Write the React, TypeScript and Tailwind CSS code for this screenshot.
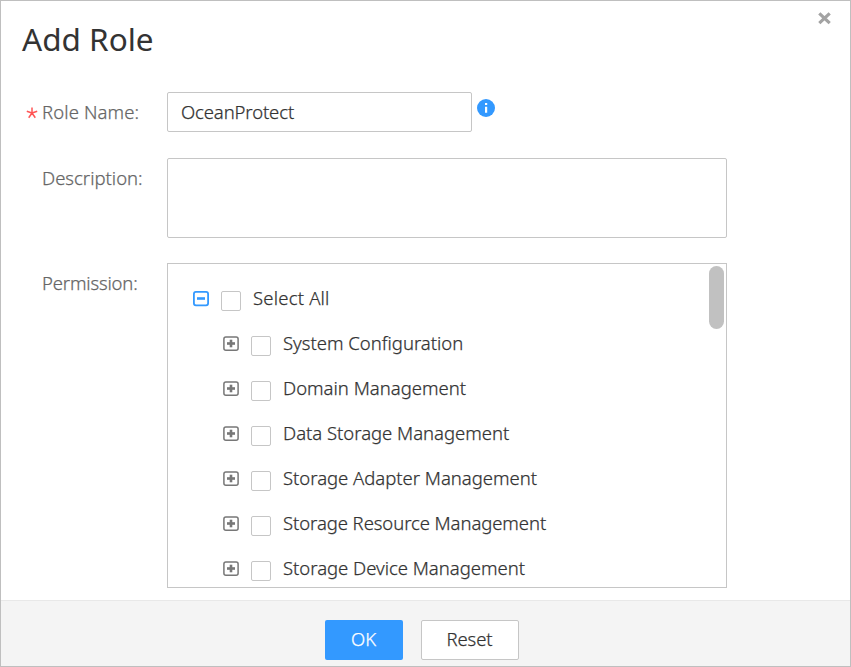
import React from "react";

const permissions = [
  { name: "System Configuration", tracking: "tracking-[0px]" },
  { name: "Domain Management", tracking: "tracking-[0px]" },
  { name: "Data Storage Management", tracking: "tracking-[-0.02px]" },
  { name: "Storage Adapter Management", tracking: "tracking-[-0.02px]" },
  { name: "Storage Resource Management", tracking: "tracking-[-0.08px]" },
  { name: "Storage Device Management", tracking: "tracking-[-0.02px]" },
];

function Toggle({ open }: { open?: boolean }) {
  return (
    <svg width="16" height="16" viewBox="0 0 16 16" className={open ? "text-[#3399ff]" : "text-[#777777]"}>
      <rect x="0.9" y="0.9" width="14.2" height="13.4" rx="2" fill="none" stroke="currentColor" strokeWidth={open ? 1.8 : 1.5} />
      <rect x="4" y="6.2" width="8" height="2.6" fill="currentColor" />
      {!open && <rect x="6.7" y="3.7" width="2.6" height="7.6" fill="currentColor" />}
    </svg>
  );
}

function Checkbox() {
  return <span className="ml-3 size-5 rounded-[2px] border border-[#c6c6c6] bg-white" />;
}

export default function App() {
  return (
    <div className="flex h-[667px] w-[851px] flex-col overflow-hidden border border-[#bfbfbf] bg-white font-['Noto_Sans',sans-serif] text-[18.5px] leading-6 font-light text-[#333333] [-webkit-text-stroke:0.25px]">
      <header className="flex h-[91px] items-start justify-between pr-[19px] pl-[21px]">
        <h1 className="mt-[17px] text-[31.5px] leading-[42px] font-normal whitespace-nowrap [-webkit-text-stroke:0px]">Add Role</h1>
        <svg width="13" height="13" viewBox="0 0 13 13" className="mt-[11px]">
          <path d="M1.3 1.3 L11.7 11.2 M11.7 1.3 L1.3 11.2" stroke="#a3a3a3" strokeWidth="3.2" />
        </svg>
      </header>

      <main className="flex h-[508px] shrink-0 flex-col">
        <div className="flex h-[66px] items-start">
          <svg width="12" height="12" viewBox="0 0 12 12" className="mt-[15px] ml-[25px]">
            <path d="M6 6V0.6M6 6L0.8 4.2M6 6L11.2 4.2M6 6L2.7 10.7M6 6L9.3 10.7" stroke="#ff5555" strokeWidth="1.5" fill="none" />
          </svg>
          <label className="mt-2 ml-1 w-[125px] tracking-[0.12px] whitespace-nowrap text-[#666666]">Role Name:</label>
          <div className="flex h-10 w-[305px] items-center rounded-[2px] border border-[#c6c6c6] pl-[13px] tracking-[-0.12px]">OceanProtect</div>
          <svg width="18" height="18" viewBox="0 0 18 18" className="mt-[7px] ml-[5px]">
            <circle cx="9" cy="9" r="9" fill="#3399ff" />
            <path d="M8 4.1h2.2v2H8zM8 7.7h2.2v6H8z" fill="white" />
          </svg>
        </div>
        <div className="flex h-[105px] items-start pl-[41px]">
          <label className="mt-2 w-[125px] whitespace-nowrap text-[#666666]">Description:</label>
          <div className="h-20 w-[560px] rounded-[2px] border border-[#c6c6c6]" />
        </div>
        <div className="flex items-start pl-[41px]">
          <label className="mt-2 w-[125px] tracking-[-0.17px] whitespace-nowrap text-[#666666]">Permission:</label>
          <div className="flex h-[325px] w-[560px] items-start justify-between overflow-hidden border border-[#c6c6c6] pr-[2px]">
            <ul className="pt-[22px]">
              <li className="flex h-[45px] items-start pl-[25px]">
                <div className="flex items-start pt-[5px]"><Toggle open /><Checkbox /></div>
                <span className="ml-3 tracking-[0.2px] whitespace-nowrap">Select All</span>
              </li>
              {permissions.map((p) => (
                <li key={p.name} className="flex h-[45px] items-start pl-[55px]">
                  <div className="flex items-start pt-[5px]"><Toggle /><Checkbox /></div>
                  <span className={`ml-3 whitespace-nowrap ${p.tracking}`}>{p.name}</span>
                </li>
              ))}
            </ul>
            <div className="mt-[2px] h-[63px] w-[15px] rounded-full bg-[#c1c1c1]" />
          </div>
        </div>
      </main>

      <footer className="flex h-[66px] shrink-0 items-start justify-center border-t border-[#e8e8e8] bg-[#f4f4f4] pt-[19px] pr-[8px]">
        <button className="mr-[18px] h-10 w-[78px] rounded-[2px] bg-[#3399ff] pb-[2px] text-white">OK</button>
        <button className="h-10 w-[98px] rounded-[2px] border border-[#c6c6c6] bg-white pb-[2px] tracking-[-0.1px]">Reset</button>
      </footer>
    </div>
  );
}
